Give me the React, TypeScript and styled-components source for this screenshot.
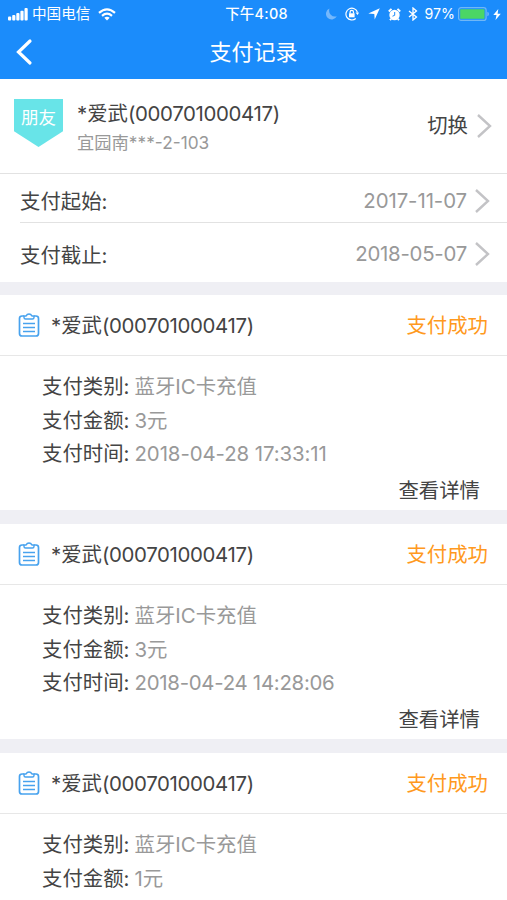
import React from "react";
import styled, { createGlobalStyle } from "styled-components";

const GlobalStyle = createGlobalStyle`
  * { box-sizing: border-box; }
  body {
    margin: 0;
    background: #efeff4;
    font-family: Inter, "Noto Sans CJK SC", sans-serif;
    color: #444;
    overflow: hidden;
  }
`;

const Screen = styled.main`
  width: 507px;
  height: 900px;
  overflow: hidden;
  background: #efeff4;
  font-size: 20.4px;
  line-height: 30px;
  white-space: nowrap;
`;

const Header = styled.header`
  height: 79px;
  background: #1b8cfb;
  color: #fff;
`;

const StatusBar = styled.div`
  display: grid;
  grid-template-columns: 1fr auto 1fr;
  align-items: center;
  height: 28px;
  padding: 0 6px 0 8px;
  font-size: 14.6px;
  line-height: 28px;
`;

const StatusGroup = styled.div<{ $end?: boolean }>`
  display: flex;
  align-items: center;
  justify-content: ${(p) => (p.$end ? "flex-end" : "flex-start")};
`;

const Carrier = styled.span`
  margin: 0 8px 0 4px;
`;

const Clock = styled.span`
  font-size: 14.4px;
  font-weight: 500;
  letter-spacing: 0.3px;
  margin-left: 4px;
`;

const Percent = styled.span`
  margin: 0 3px 0 7px;
  font-size: 14.2px;
`;

const Icon = styled.svg<{ $gap?: number }>`
  display: block;
  flex: none;
  margin-left: ${(p) => p.$gap ?? 0}px;
`;

const NavBar = styled.nav`
  display: grid;
  grid-template-columns: 60px 1fr 60px;
  align-items: center;
  height: 48px;
`;

const Title = styled.h1`
  margin: 0;
  text-align: center;
  font-size: 22px;
  font-weight: 400;
  line-height: 48px;
`;

const Account = styled.section`
  display: flex;
  align-items: center;
  height: 94px;
  padding: 0 15px 0 14px;
  background: #fff;
`;

const Tag = styled.div`
  width: 49px;
  height: 48px;
  margin-top: -6px;
  background: #68e4e8;
  clip-path: polygon(0 0, 100% 0, 100% 67%, 50% 100%, 0 67%);
  color: #fff;
  font-size: 17.5px;
  line-height: 38px;
  text-align: center;
`;

const AccountText = styled.div`
  flex: 1;
  margin: 2px 0 0 14px;
`;

const Address = styled.div`
  color: #999;
  font-size: 17.3px;
  line-height: 27px;
`;

const Latin = styled.span<{ $track?: number }>`
  letter-spacing: ${(p) => p.$track ?? 0}px;
`;

const Switch = styled.span`
  margin-right: 8px;
`;

const DateRow = styled.div<{ $tall?: boolean }>`
  display: flex;
  align-items: center;
  height: ${(p) => (p.$tall ? 60 : 48)}px;
  padding: ${(p) => (p.$tall ? "6px" : "7px")} 17px 0 0;
  border-top: 1px solid ${(p) => (p.$tall ? "#e2e2e2" : "transparent")};
`;

const DateRange = styled.section`
  padding-left: 20px;
  border-top: 1px solid #e2e2e2;
  background: #fff;
`;

const DateValue = styled.div`
  display: flex;
  align-items: center;
  gap: 7px;
  margin: 0 0 3px auto;
  color: #999;
`;

const Card = styled.article`
  height: 215px;
  margin-top: 14px;
  background: #fff;

  &:first-of-type { margin-top: 13px; }
`;

const CardHead = styled.div`
  display: flex;
  align-items: center;
  height: 61px;
  padding: 2px 19px 0 18px;
  border-bottom: 1px solid #e7e7e7;

  > svg { margin-bottom: 2px; }
`;

const Owner = styled.span`
  margin-left: 11px;
`;

const Status = styled.span`
  margin-left: auto;
  color: #ff9920;
`;

const Details = styled.dl`
  margin: 0;
  padding: 14px 0 0 42px;
`;

const Detail = styled.div`
  display: flex;
  height: 33.7px;
  line-height: 33.7px;

  dt { width: 92.5px; }
  dd { margin: 0; color: #999; }
`;

const More = styled.div`
  padding: 5px 27px 0 0;
  text-align: right;
`;

const Chevron = () => (
  <Icon width="16" height="26" viewBox="0 0 16 26" fill="none" stroke="#c3c3c6" strokeWidth="2.4">
    <path d="M2 2L14 13L2 24" />
  </Icon>
);

const Clipboard = () => (
  <Icon width="22" height="24" viewBox="0 0 22 24" fill="none" stroke="#47a2ee" strokeWidth="1.7">
    <path d="M6 3H4Q1.500 3 1.500 5.500V20.500Q1.500 23 4 23H18Q20.500 23 20.500 20.500V5.500Q20.500 3 18 3H16" />
    <path d="M6 3H8Q9 1 11 1T14 3H16V4.500Q16 6 14.500 6H7.500Q6 6 6 4.500Z" strokeWidth="1.4" />
    <path d="M5 10.500H17M5 14.500H17M5 18.500H17" strokeWidth="1.500" />
  </Icon>
);

const Signal = () => (
  <Icon width="20" height="13" viewBox="0 0 20 13" fill="#fff">
    <rect x="0" y="8.500" width="3.200" height="4" rx="1" />
    <rect x="4.200" y="7" width="3.200" height="5.500" rx="1" />
    <rect x="8.300" y="5" width="3.200" height="7.500" rx="1" />
    <rect x="12.400" y="2.700" width="3.200" height="9.800" rx="1" />
    <rect x="16.500" y="0" width="3.200" height="12.500" rx="1" />
  </Icon>
);

const Wifi = () => (
  <Icon width="18" height="13" viewBox="0 0 18 13" fill="none" stroke="#fff" strokeWidth="2.200">
    <path d="M1 4.800Q9-2.200 17 4.800M4 7.800Q9 3.600 14 7.800" />
    <path d="M6.300 9.700Q9 7.600 11.700 9.700L9 12.500Z" fill="#fff" stroke="none" />
  </Icon>
);

const Moon = () => (
  <Icon width="11" height="12" viewBox="0 0 11 12" fill="#75b8fc">
    <path d="M3.500 0.500A5.700 5.700 0 1 0 10.800 8.300A6 6 0 0 1 3.500 .5Z" />
  </Icon>
);

const RotationLock = () => (
  <Icon $gap={8} width="14" height="14" viewBox="0 0 14 14" fill="none" stroke="#fff" strokeWidth="1.200">
    <path d="M12.500 5.400A5.900 5.900 0 1 0 10.800 11.500" />
    <path d="M10.500 5.500H14L12.600 8Z" fill="#fff" stroke="none" />
    <rect x="4" y="6.300" width="5.600" height="4" fill="#fff" stroke="none" />
    <path d="M5.100 6.500V5A1.700 1.700 0 0 1 8.500 5V6.500" />
  </Icon>
);

const Location = () => (
  <Icon $gap={9} width="12" height="12" viewBox="0 0 12 12" fill="#fff">
    <path d="M11.800.300L6.700 11.500L6.300 5.900L.300 5.600Z" />
  </Icon>
);

const Alarm = () => (
  <Icon $gap={8} width="13" height="13" viewBox="0 0 13 13">
    <circle cx="6.500" cy="7" r="5.200" fill="#fff" />
    <path d="M.800 3.500L3.500.900M9.500.900L12.200 3.500M3.200 10.800L2 12.200M9.800 10.800L11 12.200" stroke="#fff" strokeWidth="1.900" />
    <path d="M6.700 4V7.300L4.500 8.200" stroke="#1b8cfb" fill="none" />
  </Icon>
);

const Bluetooth = () => (
  <Icon $gap={7} width="10" height="14" viewBox="0 0 10 14" fill="none" stroke="#fff" strokeWidth="1.300">
    <path d="M1 3.900L8.500 10L5 13V1L8.500 4L1 10.100" />
  </Icon>
);

const Battery = () => (
  <Icon width="31" height="14" viewBox="0 0 31 14">
    <rect x=".6" y=".6" width="27.500" height="12.800" rx="2.500" fill="none" stroke="#70b7f6" strokeWidth="1.200" />
    <rect x="2.200" y="2.200" width="24.300" height="9.600" rx=".6" fill="#4bd665" />
    <path d="M29.300 4.700Q31 5 31 7T29.300 9.300Z" fill="#70b7f6" />
  </Icon>
);

const Bolt = () => (
  <Icon $gap={4} width="8" height="11" viewBox="0 0 8 11" fill="#fff">
    <path d="M5.300 0L.300 6H3.500L2.500 11L7.800 4.700H4.600Z" />
  </Icon>
);

const payments = [
  { id: 1, amount: "3", time: "2018-04-28 17:33:11", track: -0.08 },
  { id: 2, amount: "3", time: "2018-04-24 14:28:06", track: -0.27 },
  { id: 3, amount: "1" },
];

const AccountName = () => (
  <>*爱武<Latin $track={-0.35}>(000701000417)</Latin></>
);

export default function App() {
  return (
    <Screen>
      <GlobalStyle />
      <Header>
        <StatusBar>
          <StatusGroup><Signal /><Carrier>中国电信</Carrier><Wifi /></StatusGroup>
          <Clock>下午4:08</Clock>
          <StatusGroup $end>
            <Moon /><RotationLock /><Location /><Alarm /><Bluetooth />
            <Percent>97%</Percent><Battery /><Bolt />
          </StatusGroup>
        </StatusBar>
        <NavBar>
          <Icon $gap={15} width="18" height="28" viewBox="0 0 18 28" fill="none" stroke="#fff" strokeWidth="3.200" strokeLinecap="round">
            <path d="M15 3L3.500 14L15 25" />
          </Icon>
          <Title>支付记录</Title>
        </NavBar>
      </Header>
      <Account>
        <Tag>朋友</Tag>
        <AccountText>
          <AccountName />
          <Address>宜园南<Latin>***-2-103</Latin></Address>
        </AccountText>
        <Switch>切换</Switch>
        <Chevron />
      </Account>
      <DateRange>
        <DateRow>
          支付起始:
          <DateValue><Latin $track={-0.08}>2017-11-07</Latin><Chevron /></DateValue>
        </DateRow>
        <DateRow $tall>
          支付截止:
          <DateValue><Latin $track={-0.25}>2018-05-07</Latin><Chevron /></DateValue>
        </DateRow>
      </DateRange>
      {payments.map((p) => (
        <Card key={p.id}>
          <CardHead>
            <Clipboard />
            <Owner><AccountName /></Owner>
            <Status>支付成功</Status>
          </CardHead>
          <Details>
            <Detail><dt>支付类别:</dt><dd>蓝牙IC卡充值</dd></Detail>
            <Detail><dt>支付金额:</dt><dd>{p.amount}元</dd></Detail>
            {p.time && (
              <Detail><dt>支付时间:</dt><dd><Latin $track={p.track}>{p.time}</Latin></dd></Detail>
            )}
          </Details>
          {p.time && <More>查看详情</More>}
        </Card>
      ))}
    </Screen>
  );
}
